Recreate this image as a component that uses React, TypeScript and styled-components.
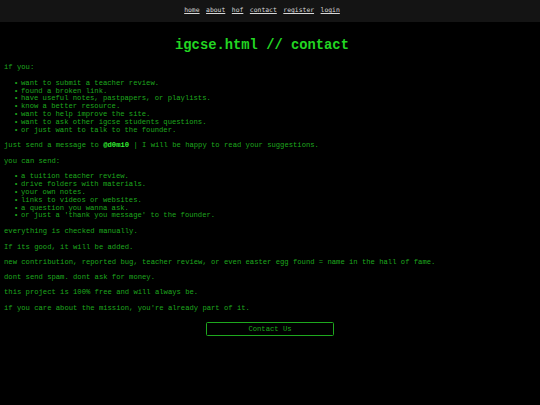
import React from "react";
import styled, { createGlobalStyle } from "styled-components";

const GlobalStyle = createGlobalStyle`
  html, body {
    margin: 0;
    padding: 0;
    background: #000;
  }
  body {
    font-family: "Liberation Mono", "Courier New", monospace;
    font-size: 7.2px;
    line-height: 7.8px;
    color: #1ea81e;
  }
`;

const Page = styled.div`
  min-height: 405px;
  background: #000;
`;

const NavBar = styled.nav`
  height: 22px;
  background: #141414;
  display: flex;
  align-items: center;
  justify-content: center;
  gap: 6.5px;
  padding-right: 16px;
`;

const NavLink = styled.a`
  font-family: "DejaVu Sans Mono", monospace;
  font-size: 6.4px;
  color: #d8d8d8;
  text-decoration: underline;
  cursor: pointer;
`;

const Main = styled.main`
  padding: 0 4px;
`;

const Title = styled.h1`
  margin: 16px 0 10px;
  padding-right: 16px;
  text-align: center;
  font-size: 13.8px;
  font-weight: bold;
  line-height: 16px;
  color: #22d622;
`;

const Para = styled.p`
  margin: 7.5px 0;
`;

const List = styled.ul`
  margin: 8px 0;
  padding-left: 17px;
  list-style: none;
`;

const Item = styled.li`
  &::before {
    content: "•";
    display: inline-block;
    width: 7px;
    margin-left: -7px;
  }
`;

const Handle = styled.b`
  color: #33ee33;
`;

const ButtonRow = styled.div`
  display: flex;
  justify-content: center;
  margin-top: 9px;
`;

const ContactButton = styled.button`
  width: 128px;
  height: 14px;
  padding: 0;
  background: #000;
  border: 1.5px solid #1ea81e;
  border-radius: 1.5px;
  color: #1ea81e;
  font-family: "Liberation Mono", "Courier New", monospace;
  font-size: 7.2px;
  cursor: pointer;
`;

const navItems = ["home", "about", "hof", "contact", "register", "login"];

const ifYou = [
  "want to submit a teacher review.",
  "found a broken link.",
  "have useful notes, pastpapers, or playlists.",
  "know a better resource.",
  "want to help improve the site.",
  "want to ask other igcse students questions.",
  "or just want to talk to the founder.",
];

const canSend = [
  "a tuition teacher review.",
  "drive folders with materials.",
  "your own notes.",
  "links to videos or websites.",
  "a question you wanna ask.",
  "or just a 'thank you message' to the founder.",
];

const closing = [
  "everything is checked manually.",
  "If its good, it will be added.",
  "new contribution, reported bug, teacher review, or even easter egg found = name in the hall of fame.",
  "dont send spam. dont ask for money.",
  "this project is 100% free and will always be.",
  "if you care about the mission, you're already part of it.",
];

export default function App() {
  return (
    <Page>
      <GlobalStyle />
      <NavBar>
        {navItems.map((n) => (
          <NavLink key={n}>{n}</NavLink>
        ))}
      </NavBar>
      <Main>
        <Title>igcse.html // contact</Title>
        <Para>if you:</Para>
        <List>
          {ifYou.map((t) => (
            <Item key={t}>{t}</Item>
          ))}
        </List>
        <Para>
          just send a message to <Handle>@d0mi0</Handle> | I will be happy to
          read your suggestions.
        </Para>
        <Para>you can send:</Para>
        <List>
          {canSend.map((t) => (
            <Item key={t}>{t}</Item>
          ))}
        </List>
        {closing.map((t) => (
          <Para key={t}>{t}</Para>
        ))}
        <ButtonRow>
          <ContactButton>Contact Us</ContactButton>
        </ButtonRow>
      </Main>
    </Page>
  );
}
